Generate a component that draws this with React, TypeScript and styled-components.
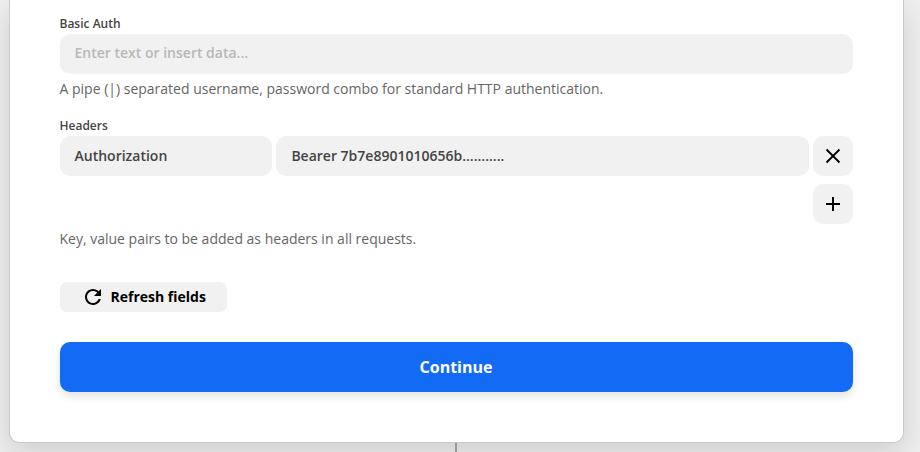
import React from 'react';
import styled, { createGlobalStyle } from 'styled-components';

const Global = createGlobalStyle`
  *{box-sizing:border-box}
  body{margin:0;background:#efefef;font-family:"Open Sans",sans-serif;overflow:hidden}
`;
const Page = styled.main`
  height:452px; padding:0 16px 0 9px; display:flex; flex-direction:column; overflow:hidden;
`;
const Card = styled.section`
  height:443px; flex:none; padding:15px 50.5px 0 49.5px; background:#fff; border:1px solid #c8c8c8; border-top:0;
  border-radius:0 0 10px 10px; box-shadow:0 10px 30px rgba(0,0,0,.14);
`;
const Label = styled.label`
  display:block; height:19px; line-height:17px; font-size:12px; font-weight:600; color:#444;
`;
const Field = styled.div<{ $empty?: boolean; $width?: number }>`
  height:40px; padding:0 15px; border-radius:10px; background:#f1f1f1; line-height:${p => (p.$empty ? 37 : 39)}px;
  font-size:14px; font-weight:600; color:${p => (p.$empty ? '#b8b8b8' : '#444')};
  flex:${p => (p.$width ? `0 0 ${p.$width}px` : '1')};
`;
const Hint = styled.p`
  margin:0; font-size:14px; line-height:20px; color:#666; padding-top:5px;
`;
const HeadersGroup = styled.div`margin-top:18px;`;
const HeaderRow = styled.div`display:flex; gap:4px;`;
const AddRow = styled.div`display:flex; justify-content:flex-end; margin-top:8px;`;
const IconButton = styled.button`
  width:40px; height:40px; padding:0; border:0; border-radius:10px; background:#f1f1f1;
  display:flex; align-items:center; justify-content:center; flex:none;
`;
const RefreshButton = styled.button`
  margin-top:33px; width:167px; height:30px; padding:0 0 0 21px; border:0; border-radius:7px; background:#f1f1f1;
  display:flex; align-items:center; gap:6px; font:700 14px/30px "Open Sans",sans-serif; color:#000;
`;
const Continue = styled.button`
  display:block; margin-top:30px; width:100%; height:50px; border:0; border-radius:10px; background:#136bf5; color:#fff;
  font:700 16px/50px "Open Sans",sans-serif; padding:0; box-shadow:0 4px 10px rgba(0,0,0,.12);
`;
const Connector = styled.div`width:2px; height:9px; margin-left:446px; background:#979797; position:relative;`;

const Icon = ({ d, size }: { d: string; size: number }) => (
  <svg width={size} height={size} viewBox="0 0 24 24" fill="#000"><path d={d} /></svg>
);
const StrokeIcon = ({ d, width }: { d: string; width: number }) => (
  <svg width="24" height="24" viewBox="0 0 24 24" fill="none" stroke="#000" strokeWidth={width}><path d={d} /></svg>
);

export default function App() {
  return (
    <Page>
      <Global />
      <Card>
        <Label>Basic Auth</Label>
        <Field $empty>Enter text or insert data...</Field>
        <Hint>A pipe (|) separated username, password combo for standard HTTP authentication.</Hint>
        <HeadersGroup>
          <Label>Headers</Label>
          <HeaderRow>
            <Field $width={212.9}>Authorization</Field>
            <Field>Bearer 7b7e8901010656b...........</Field>
            <IconButton aria-label="Remove"><StrokeIcon width={1.8} d="M5.5 5.5 18.5 18.5M18.5 5.5 5.5 18.5" /></IconButton>
          </HeaderRow>
          <AddRow>
            <IconButton aria-label="Add"><StrokeIcon width={2} d="M12 5v14M5 12h14" /></IconButton>
          </AddRow>
          <Hint>Key, value pairs to be added as headers in all requests.</Hint>
        </HeadersGroup>
        <RefreshButton><Icon size={24} d="M17.65 6.35C16.2 4.9 14.21 4 12 4c-4.42 0-7.99 3.58-7.99 8s3.57 8 7.99 8c3.73 0 6.84-2.55 7.73-6h-2.08c-.82 2.33-3.04 4-5.65 4-3.31 0-6-2.69-6-6s2.69-6 6-6c1.66 0 3.14.69 4.22 1.78L13 11h7V4l-2.35 2.35z" />Refresh fields</RefreshButton>
        <Continue>Continue</Continue>
      </Card>
      <Connector />
    </Page>
  );
}
